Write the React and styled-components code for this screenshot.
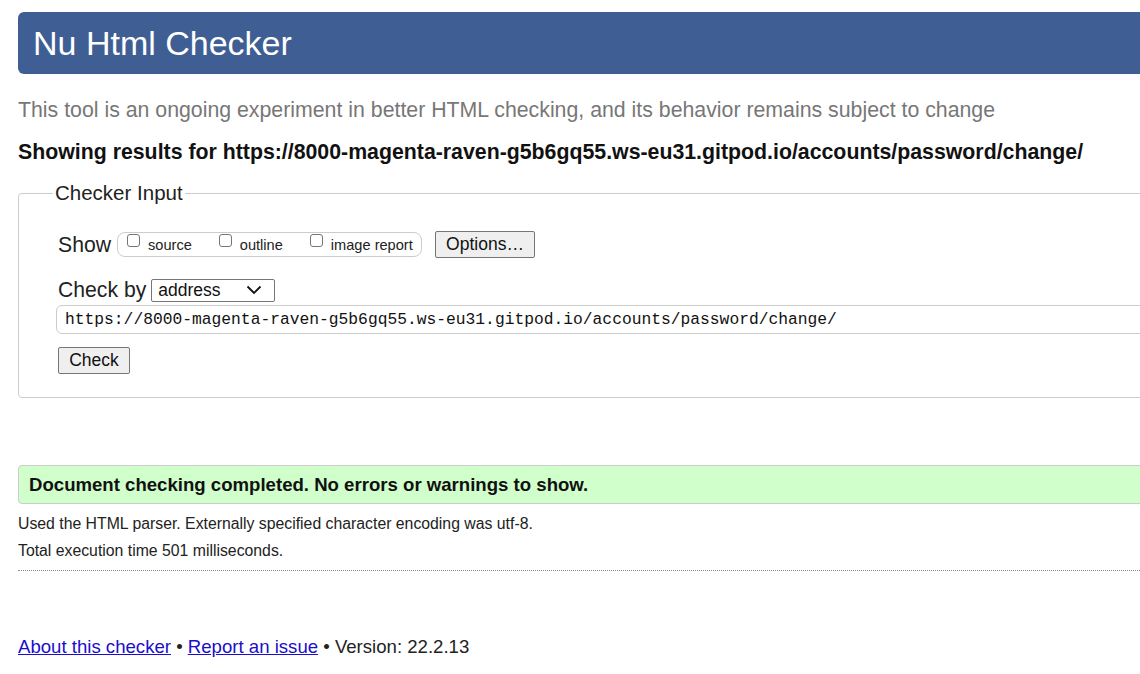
import styled, { createGlobalStyle } from "styled-components";

const GlobalStyle = createGlobalStyle`
  html, body {
    margin: 0;
    padding: 0;
    background: #fff;
    overflow: hidden;
  }
  body {
    font-family: "Liberation Sans", Arial, sans-serif;
    color: #111;
  }
`;

const Page = styled.div`
  width: 1220px;
  padding: 12px 0 0 18px;
`;

const Header = styled.header`
  height: 62px;
  background: #3e5e94;
  border-radius: 6px;
  display: flex;
  align-items: center;
  padding-left: 15px;
`;

const Title = styled.h1`
  margin: 0;
  font-size: 34px;
  font-weight: normal;
  color: #fff;
`;

const Lead = styled.p`
  margin: 24px 0 0;
  font-size: 21.3px;
  line-height: 24px;
  color: #777;
`;

const Results = styled.p`
  margin: 18px 0 0;
  font-size: 21.3px;
  line-height: 24px;
  font-weight: bold;
  color: #111;
`;

const Fieldset = styled.fieldset`
  margin: 17px 0 0;
  padding: 26px 40px 23px 39px;
  border: 1px solid #ccc;
  border-radius: 4px;
`;

const Legend = styled.legend`
  font-size: 20.5px;
  padding: 0 2px;
  margin-left: -5px;
  color: #222;
`;

const Row = styled.div`
  display: flex;
  align-items: center;
  margin-top: ${({ $top }) => $top || 0}px;
`;

const Label = styled.span`
  font-size: 21.2px;
  color: #222;
  margin-right: ${({ $gap }) => $gap || 6}px;
`;

const CheckGroup = styled.div`
  display: flex;
  align-items: center;
  height: 25px;
  width: 305px;
  padding-left: 9px;
  box-sizing: border-box;
  border: 1px solid #ccc;
  border-radius: 8px;
  margin-right: 13px;
`;

const CheckItem = styled.label`
  display: flex;
  align-items: flex-start;
  font-size: 14.6px;
  color: #222;
  margin-right: ${({ $gap }) => $gap}px;
`;

const Box = styled.span`
  width: 13px;
  height: 13px;
  border: 1px solid #767676;
  border-radius: 3px;
  box-sizing: border-box;
  margin: -3px 8px 0 0;
`;

const Button = styled.button`
  font-family: "Liberation Sans", Arial, sans-serif;
  font-size: 17.5px;
  color: #111;
  background: #efefef;
  border: 1px solid #767676;
  border-radius: 2px;
  height: 27px;
  width: ${({ $w }) => $w}px;
  padding: 0;
`;

const Select = styled.div`
  width: 124px;
  height: 23px;
  box-sizing: border-box;
  border: 1px solid #767676;
  border-radius: 2px;
  display: flex;
  align-items: center;
  justify-content: space-between;
  padding: 0 12px 0 6px;
  font-size: 17.5px;
  color: #111;
`;

const UrlInput = styled.div`
  height: 29px;
  box-sizing: border-box;
  margin: 3px 0 0 -2px;
  border: 1px solid #ccc;
  border-radius: 6px;
  display: flex;
  align-items: center;
  padding-left: 8px;
  font-family: "Liberation Mono", "DejaVu Sans Mono", monospace;
  font-size: 16.3px;
  color: #111;
`;

const Success = styled.div`
  margin-top: 67px;
  height: 39px;
  box-sizing: border-box;
  background: #d0ffcc;
  border: 1px solid #ccc;
  border-radius: 4px;
  display: flex;
  align-items: center;
  padding-left: 10px;
  font-size: 18.6px;
  font-weight: bold;
  color: #111;
`;

const Notes = styled.div`
  margin-top: 6px;
`;

const Note = styled.p`
  margin: 0;
  font-size: 15.8px;
  line-height: 27px;
  color: #222;
`;

const Rule = styled.hr`
  margin: 6px 0 0;
  border: 0;
  border-top: 1px dotted #888;
`;

const Footer = styled.footer`
  margin-top: 65px;
  font-size: 18.6px;
  color: #222;
`;

const FootLink = styled.a`
  color: #1a0dcc;
  text-decoration: underline;
`;

const Chevron = () => (
  <svg width="16" height="10" viewBox="0 0 16 10">
    <path d="M1.5 1.5 L8 8 L14.5 1.5" fill="none" stroke="#111" strokeWidth="1.8" />
  </svg>
);

const url =
  "https://8000-magenta-raven-g5b6gq55.ws-eu31.gitpod.io/accounts/password/change/";

export default function App() {
  return (
    <>
      <GlobalStyle />
      <Page>
        <Header>
          <Title>Nu Html Checker</Title>
        </Header>
        <Lead>
          This tool is an ongoing experiment in better HTML checking, and its
          behavior remains subject to change
        </Lead>
        <Results>Showing results for {url}</Results>

        <Fieldset>
          <Legend>Checker Input</Legend>
          <Row>
            <Label $gap={6}>Show</Label>
            <CheckGroup>
              <CheckItem $gap={27}>
                <Box />
                source
              </CheckItem>
              <CheckItem $gap={27}>
                <Box />
                outline
              </CheckItem>
              <CheckItem $gap={0}>
                <Box />
                image report
              </CheckItem>
            </CheckGroup>
            <Button $w={100}>Options…</Button>
          </Row>
          <Row $top={20}>
            <Label $gap={5}>Check by</Label>
            <Select>
              address
              <Chevron />
            </Select>
          </Row>
          <UrlInput>{url}</UrlInput>
          <Row $top={13}>
            <Button $w={72}>Check</Button>
          </Row>
        </Fieldset>

        <Success>Document checking completed. No errors or warnings to show.</Success>
        <Notes>
          <Note>
            Used the HTML parser. Externally specified character encoding was utf-8.
          </Note>
          <Note>Total execution time 501 milliseconds.</Note>
        </Notes>
        <Rule />

        <Footer>
          <FootLink href="#">About this checker</FootLink> •{" "}
          <FootLink href="#">Report an issue</FootLink> • Version: 22.2.13
        </Footer>
      </Page>
    </>
  );
}
